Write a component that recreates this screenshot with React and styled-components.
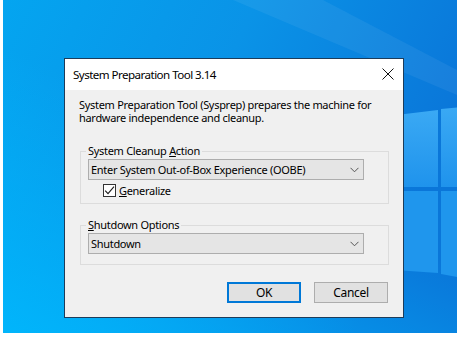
import styled, { createGlobalStyle } from "styled-components";

const GlobalStyle = createGlobalStyle`
  html, body {
    margin: 0;
    padding: 0;
    background: #ffffff;
  }
`;

function Chevron() {
  return (
    <svg width="9" height="6" viewBox="0 0 9 6">
      <path d="M0.5 0.8 L4.5 4.8 L8.5 0.8" fill="none" stroke="#555" strokeWidth="1" />
    </svg>
  );
}

function Check() {
  return (
    <svg width="11" height="11" viewBox="0 0 11 11">
      <path d="M1.2 5.6 L4 8.6 L10 1.6" fill="none" stroke="#1a1a1a" strokeWidth="1.1" />
    </svg>
  );
}

function CloseIcon() {
  return (
    <svg width="12" height="12" viewBox="0 0 12 12">
      <path d="M0.5 0.5 L11.5 11.5 M11.5 0.5 L0.5 11.5" stroke="#111" strokeWidth="1" />
    </svg>
  );
}

function Wallpaper() {
  return (
    <WallSvg viewBox="0 0 454 333" preserveAspectRatio="none">
      <defs>
        <linearGradient id="bg" x1="0" y1="0" x2="1" y2="0.35">
          <stop offset="0" stopColor="#04a5f0" />
          <stop offset="0.5" stopColor="#0a93e7" />
          <stop offset="1" stopColor="#0a76d9" />
        </linearGradient>
        <linearGradient id="glow" x1="0" y1="1" x2="0.4" y2="0.4">
          <stop offset="0" stopColor="#00b8fd" stopOpacity="0.9" />
          <stop offset="1" stopColor="#00b8fd" stopOpacity="0" />
        </linearGradient>
        <linearGradient id="pane" x1="0" y1="0" x2="0" y2="1">
          <stop offset="0" stopColor="#3aa9f4" />
          <stop offset="1" stopColor="#1f93ec" />
        </linearGradient>
      </defs>
      <rect width="454" height="333" fill="url(#bg)" />
      <rect width="454" height="333" fill="url(#glow)" />
      <polygon points="230,0 320,0 454,70 454,95" fill="#ffffff" opacity="0.06" />
      <polygon points="377,117 435,110 435,187 377,187" fill="url(#pane)" />
      <polygon points="438,109 460,107 460,187 438,187" fill="url(#pane)" />
      <polygon points="377,191 435,191 435,273 377,269" fill="#1f96ed" />
      <polygon points="438,191 460,191 460,278 438,274" fill="#1f96ed" />
    </WallSvg>
  );
}

export default function App() {
  return (
    <>
      <GlobalStyle />
      <Desktop>
        <Wallpaper />
        <Dialog>
          <TitleBar>
            <Title>System Preparation Tool 3.14</Title>
            <CloseButton>
              <CloseIcon />
            </CloseButton>
          </TitleBar>
          <Body>
            <Description>
              <Line>System Preparation Tool (Sysprep) prepares the machine for</Line>
              <Line>hardware independence and cleanup.</Line>
            </Description>
            <Group $pb={6}>
              <Legend>
                System Cleanup <u>A</u>ction
              </Legend>
              <Combo>
                <span>Enter System Out-of-Box Experience (OOBE)</span>
                <Chevron />
              </Combo>
              <CheckRow>
                <CheckBox>
                  <Check />
                </CheckBox>
                <span>
                  <u>G</u>eneralize
                </span>
              </CheckRow>
            </Group>
            <Group $mt={14} $pb={10}>
              <Legend>
                <u>S</u>hutdown Options
              </Legend>
              <Combo>
                <span>Shutdown</span>
                <Chevron />
              </Combo>
            </Group>
            <Buttons>
              <Button $default>OK</Button>
              <Button>Cancel</Button>
            </Buttons>
          </Body>
        </Dialog>
      </Desktop>
    </>
  );
}

const Desktop = styled.div`
  position: relative;
  margin-left: 3px;
  width: 454px;
  height: 333px;
  overflow: hidden;
  box-sizing: border-box;
  padding: 58px 0 0 61px;
`;

const WallSvg = styled.svg`
  position: absolute;
  left: 0;
  top: 0;
  width: 454px;
  height: 333px;
  z-index: 0;
`;

const Dialog = styled.div`
  position: relative;
  z-index: 1;
  width: 340px;
  box-sizing: border-box;
  border: 1px solid #1d3c5a;
  background: #f0f0f0;
  font-family: "Segoe UI", "Noto Sans", sans-serif;
  color: #000;
`;

const TitleBar = styled.div`
  height: 30px;
  background: #ffffff;
  display: flex;
  align-items: center;
  justify-content: space-between;
  padding: 0 9px 1px 8px;
`;

const Title = styled.div`
  font-size: 11.6px;
  letter-spacing: -0.55px;
`;

const CloseButton = styled.div`
  display: flex;
  align-items: center;
`;

const Body = styled.div`
  padding: 8px 14px 14px 15px;
  font-size: 11px;
  letter-spacing: -0.3px;
`;

const Description = styled.div`
  margin-left: -1px;
`;

const Line = styled.div`
  height: 13px;
  line-height: 13px;
  white-space: nowrap;
`;

const Group = styled.fieldset`
  margin: ${(p) => p.$mt || 20}px 0 0 0;
  padding: 1px 24px ${(p) => p.$pb}px 7px;
  border: 1px solid #dcdcdc;
`;

const Legend = styled.legend`
  padding: 0 2px;
  margin-left: -2px;
  line-height: 14px;
`;

const Combo = styled.div`
  height: 21px;
  box-sizing: border-box;
  border: 1px solid #adadad;
  background: #e5e5e5;
  display: flex;
  align-items: center;
  justify-content: space-between;
  padding: 0 4px 0 2px;
`;

const CheckRow = styled.div`
  display: flex;
  align-items: center;
  gap: 3px;
  margin: 4px 0 0 15px;
  height: 13px;
`;

const CheckBox = styled.div`
  width: 13px;
  height: 13px;
  box-sizing: border-box;
  border: 1px solid #333;
  background: #fff;
  display: flex;
  align-items: center;
  justify-content: center;
`;

const Buttons = styled.div`
  display: flex;
  justify-content: flex-end;
  gap: 13px;
  margin-top: 17px;
  padding-right: 1px;
`;

const Button = styled.div`
  width: 74px;
  height: 21px;
  box-sizing: border-box;
  background: #e1e1e1;
  border: ${(p) => (p.$default ? "2px solid #0078d7" : "1px solid #adadad")};
  display: flex;
  align-items: center;
  justify-content: center;
  font-size: 12px;
  letter-spacing: -0.3px;
`;
